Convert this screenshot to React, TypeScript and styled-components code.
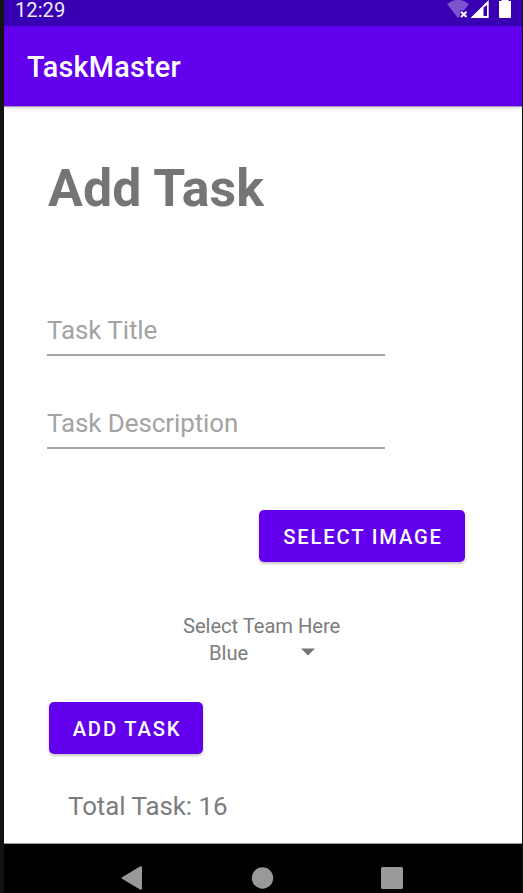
import React from 'react';
import styled, { createGlobalStyle } from 'styled-components';

const GlobalStyle = createGlobalStyle`
  * { box-sizing: border-box; }
  body { margin: 0; background: #131313; overflow: hidden; }
`;

const Screen = styled.div`
  width: 523px;
  height: 893px;
  padding: 0 1px 0 4px;
  display: flex;
  flex-direction: column;
  overflow: hidden;
  background: #131313;
  font-family: Roboto, sans-serif;
  color: #757575;
`;

const StatusBar = styled.header`
  height: 26px;
  flex: none;
  display: flex;
  justify-content: space-between;
  background: #3700b3;
`;

const Clock = styled.span`
  padding-left: 11px;
  font-size: 20.2px;
  line-height: 20px;
  color: #f0eafa;
`;

const StatusIcons = styled.svg`
  width: 99px;
  height: 26px;
`;

const Toolbar = styled.div`
  height: 80px;
  flex: none;
  padding: 2px 0 0 23px;
  display: flex;
  align-items: center;
  background: #6200ee;
  box-shadow: 0 1px 1px rgba(60, 40, 100, 0.4), 0 2px 6px rgba(0, 0, 0, 0.12);
  z-index: 1;
`;

const AppName = styled.span`
  font-size: 28.8px;
  font-weight: 500;
  letter-spacing: 0.2px;
  color: #fff;
`;

const Content = styled.main`
  height: 738px;
  flex: none;
  display: flex;
  flex-direction: column;
  align-items: flex-start;
  background: #fff;
  border-bottom: 1px solid #999;
`;

const Heading = styled.h1`
  margin: 53px 0 0 44px;
  font-size: 51.8px;
  line-height: 60px;
  font-weight: 700;
  letter-spacing: 0.15px;
`;

const Fields = styled.div`
  margin: 96px 0 0 43px;
  width: 338px;
  display: flex;
  flex-direction: column;
  gap: 52px;
`;

const Field = styled.div`
  height: 41px;
  font-size: 25.9px;
  line-height: 30px;
  letter-spacing: -0.05px;
  color: #a3a3a3;
  border-bottom: 2px solid #a6a6a6;
`;

const Button = styled.button<{ $width: number }>`
  width: ${(p) => p.$width}px;
  height: 52px;
  padding: 2px 0 0 2px;
  border: 0;
  border-radius: 5px;
  background: #6200ee;
  box-shadow: 0 2px 3px rgba(0, 0, 0, 0.22);
  font: 500 20.2px Roboto, sans-serif;
  letter-spacing: 1.83px;
  color: #fff;
  white-space: nowrap;
`;

const ImageAction = styled.div`
  margin: 61px 0 0 255px;
`;

const TeamPicker = styled.div`
  margin: 50px 0 0 179px;
  font-size: 20.2px;
  line-height: 28px;
  letter-spacing: -0.05px;
  color: #7c7c7c;
`;

const TeamLabel = styled.div`
  white-space: nowrap;
`;

const TeamValue = styled.div`
  display: flex;
  align-items: center;
  justify-content: space-between;
  width: 106px;
  height: 27px;
  margin-left: 26px;
`;

const TeamName = styled.span`
  margin-top: -1px;
`;

const Caret = styled.svg`
  width: 14px;
  height: 8px;
  margin-top: -3px;
  fill: #757575;
`;

const AddAction = styled.div`
  margin: 35px 0 0 45px;
`;

const Total = styled.div`
  margin: 37px 0 0 64px;
  font-size: 25.9px;
  line-height: 30px;
  letter-spacing: -0.05px;
  color: #7c7c7c;
`;

const NavBar = styled.nav`
  height: 49px;
  flex: none;
  background: #000;
`;

const NavIcons = styled.svg`
  display: block;
  width: 518px;
  height: 49px;
  fill: #999;
`;

export default function App() {
  return (
    <Screen>
      <GlobalStyle />
      <StatusBar>
        <Clock>12:29</Clock>
        <StatusIcons viewBox="423 0 99 26">
          <path d="M447 4Q458 -4.5 469 4L464 10.500H460V16L458 18Z" fill="#7c54cd" />
          <path d="M461 11.700L466.500 17M466.500 11.700L461 17" stroke="#fff" strokeWidth="2" />
          <path d="M470.500 18L488.700 0V18Z" fill="#fff" />
          <path d="M483.500 7.500L487 5V16H483.500Z" fill="#3700b3" />
          <path d="M499 1H501.500V0H508.500V1H511V17Q511 18 510 18H500Q499 18 499 17Z" fill="#fff" />
        </StatusIcons>
      </StatusBar>
      <Toolbar>
        <AppName>TaskMaster</AppName>
      </Toolbar>
      <Content>
        <Heading>Add Task</Heading>
        <Fields>
          <Field>Task Title</Field>
          <Field>Task Description</Field>
        </Fields>
        <ImageAction>
          <Button $width={206}>SELECT IMAGE</Button>
        </ImageAction>
        <TeamPicker>
          <TeamLabel>Select Team Here</TeamLabel>
          <TeamValue>
            <TeamName>Blue</TeamName>
            <Caret viewBox="0 0 14 8">
              <path d="M0 0.500H14L7 7.500Z" />
            </Caret>
          </TeamValue>
        </TeamPicker>
        <AddAction>
          <Button $width={154}>ADD TASK</Button>
        </AddAction>
        <Total>Total Task: 16</Total>
      </Content>
      <NavBar>
        <NavIcons viewBox="4 844 518 49">
          <path d="M122 877.300Q120.800 878 122 878.700L140 889.500Q142 890.500 142 888.500V867.500Q142 865.500 140 866.500Z" />
          <circle cx="262.500" cy="878" r="10.700" />
          <rect x="381" y="867" width="22" height="22" rx="1.500" />
        </NavIcons>
      </NavBar>
    </Screen>
  );
}
